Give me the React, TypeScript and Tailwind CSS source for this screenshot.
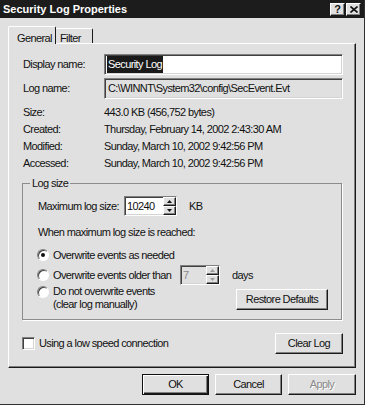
import React from "react";

// win2k style bevels
const sunken =
  "border border-t-[#808080] border-l-[#808080] border-b-white border-r-white shadow-[inset_1px_1px_0_#404040,inset_-1px_-1px_0_#d4d4d4]";
const raised =
  "border border-t-white border-l-white border-b-[#1a1a1a] border-r-[#1a1a1a] shadow-[inset_-1px_-1px_0_#808080]";

function Radio({ checked }: { checked?: boolean }) {
  return (
    <span className="w-[12px] h-[12px] rounded-full bg-white border border-t-[#808080] border-l-[#808080] border-b-white border-r-white shadow-[inset_1px_1px_0_#404040] flex items-center justify-center shrink-0">
      {checked && <span className="w-[4px] h-[4px] rounded-full bg-[#111]" />}
    </span>
  );
}

function Spin({ disabled }: { disabled?: boolean }) {
  const fill = disabled ? "#9a9a9a" : "#111";
  return (
    <div className="flex flex-col w-[13px] h-full shrink-0">
      <div className={`${raised} flex-1 flex items-center justify-center bg-[#e0e0e0]`}>
        <svg width="5" height="3" viewBox="0 0 5 3">
          <path d="M2.5 0 L5 3 L0 3Z" fill={fill} />
        </svg>
      </div>
      <div className={`${raised} flex-1 flex items-center justify-center bg-[#e0e0e0]`}>
        <svg width="5" height="3" viewBox="0 0 5 3">
          <path d="M0 0 L5 0 L2.5 3Z" fill={fill} />
        </svg>
      </div>
    </div>
  );
}

function Button({ label, w, disabled }: { label: string; w: string; disabled?: boolean }) {
  return (
    <div
      className={`${raised} ${w} h-[21px] flex items-center justify-center ${
        disabled ? "text-[#8a8a8a] [text-shadow:1px_1px_0_#fff]" : ""
      }`}
    >
      {label}
    </div>
  );
}

const info = [
  ["Size:", "443.0 KB (456,752 bytes)"],
  ["Created:", "Thursday, February 14, 2002 2:43:30 AM"],
  ["Modified:", "Sunday, March 10, 2002 9:42:56 PM"],
  ["Accessed:", "Sunday, March 10, 2002 9:42:56 PM"],
];

export default function App() {
  return (
    <div className="w-[365px] h-[405px] bg-[#e0e0e0] border-r border-b border-r-[#303030] border-b-[#303030] flex flex-col font-['Liberation_Sans',Arial,sans-serif] text-[11px] text-[#111] tracking-[-0.6px] overflow-hidden">
      {/* title bar */}
      <div className="h-[18px] bg-[#1c1c1c] flex items-center pl-[3px] pr-[3px] shrink-0">
        <span className="flex-1 font-bold text-white tracking-normal">Security Log Properties</span>
        <div className={`${raised} w-[15px] h-[13px] bg-[#e0e0e0] flex items-center justify-center font-bold text-[11px] leading-none tracking-normal`}>
          ?
        </div>
        <div className={`${raised} w-[15px] h-[13px] ml-[1px] bg-[#e0e0e0] flex items-center justify-center`}>
          <svg width="8" height="7" viewBox="0 0 8 7">
            <path d="M0.5 0.5 L7.5 6.5 M7.5 0.5 L0.5 6.5" stroke="#111" strokeWidth="1.6" />
          </svg>
        </div>
      </div>

      <div className="px-[8px] pt-[8px] flex flex-col">
        {/* tabs */}
        <div className="flex items-end h-[17px]">
          <div className="relative z-10 -mb-px w-[48px] h-[18px] bg-[#e0e0e0] border-t border-l border-r border-t-white border-l-white border-r-[#1a1a1a] rounded-t-[2px] pl-[8px] pt-[3px]">
            General
          </div>
          <div className="w-[37px] h-[15px] border-t border-r border-t-white border-r-[#1a1a1a] rounded-tr-[2px] pl-[4px] pt-[1px]">
            Filter
          </div>
        </div>

        {/* tab panel */}
        <div className="h-[325px] border border-t-white border-l-white border-r-[#1a1a1a] border-b-[#1a1a1a] shadow-[inset_-1px_-1px_0_#808080] pt-[10px] pl-[14px] pr-[12px] flex flex-col">
          <div className="flex items-center h-[21px]">
            <span className="w-[81px] shrink-0">Display name:</span>
            <div className={`${sunken} flex-1 h-[21px] bg-white flex items-center pl-[2px]`}>
              <span className="bg-[#1a1a1a] text-white px-[1px]">Security Log</span>
            </div>
          </div>
          <div className="flex items-center h-[21px] mt-[3px]">
            <span className="w-[81px] shrink-0">Log name:</span>
            <div className={`${sunken} flex-1 h-[21px] flex items-center pl-[3px] overflow-hidden whitespace-nowrap`}>
              C:\WINNT\System32\config\SecEvent.Evt
            </div>
          </div>

          <div className="mt-[5px] flex flex-col">
            {info.map(([k, v]) => (
              <div key={k} className="flex items-center h-[17px]">
                <span className="w-[81px] shrink-0">{k}</span>
                <span>{v}</span>
              </div>
            ))}
          </div>

          {/* log size group */}
          <fieldset className="mt-[5px] ml-[-1px] mr-[1px] border border-[#8c8c8c] shadow-[1px_1px_0_#fff] p-0">
            <legend className="ml-[7px] px-[2px] leading-[13px]">Log size</legend>
            <div className="pl-[15px] pr-[13px] pb-[8px] flex flex-col">
              <div className="mt-[6px] flex items-center h-[20px]">
                <span className="w-[86px] shrink-0">Maximum log size:</span>
                <div className={`${sunken} w-[53px] h-[20px] bg-white flex items-center`}>
                  <span className="flex-1 pl-[2px]">10240</span>
                  <Spin />
                </div>
                <span className="ml-[12px]">KB</span>
              </div>

              <div className="mt-[10px] leading-[13px]">When maximum log size is reached:</div>

              <div className="mt-[6px] ml-[-1px] flex items-center h-[20px]">
                <Radio checked />
                <span className="ml-[4px]">Overwrite events as needed</span>
              </div>
              <div className="ml-[-1px] flex items-center h-[20px]">
                <Radio />
                <span className="ml-[4px] w-[127px] shrink-0">Overwrite events older than</span>
                <div className={`${sunken} w-[40px] h-[20px] flex items-center`}>
                  <span className="flex-1 pl-[2px] text-[#8a8a8a]">7</span>
                  <Spin disabled />
                </div>
                <span className="ml-[12px]">days</span>
              </div>
              <div className="flex items-start justify-between">
                <div className="ml-[-1px] flex items-start">
                  <span className="mt-[1px]">
                    <Radio />
                  </span>
                  <div className="ml-[4px] leading-[13px] flex flex-col">
                    <span>Do not overwrite events</span>
                    <span>(clear log manually)</span>
                  </div>
                </div>
                <div className="mt-[4px]">
                  <Button label="Restore Defaults" w="w-[92px]" />
                </div>
              </div>
            </div>
          </fieldset>

          <div className="mt-[13px] flex items-center justify-between">
            <div className="ml-[-1px] flex items-center">
              <span className={`${sunken} w-[13px] h-[13px] bg-white`} />
              <span className="ml-[4px]">Using a low speed connection</span>
            </div>
            <Button label="Clear Log" w="w-[68px]" />
          </div>
        </div>

        {/* dialog buttons */}
        <div className="mt-[6px] flex justify-end gap-[6px]">
          <div className="w-[67px] h-[21px] border border-[#111] shadow-[inset_1px_1px_0_#fff,inset_-1px_-1px_0_#1a1a1a,inset_-2px_-2px_0_#808080] flex items-center justify-center">
            OK
          </div>
          <Button label="Cancel" w="w-[67px]" />
          <Button label="Apply" w="w-[68px]" disabled />
        </div>
      </div>
    </div>
  );
}
